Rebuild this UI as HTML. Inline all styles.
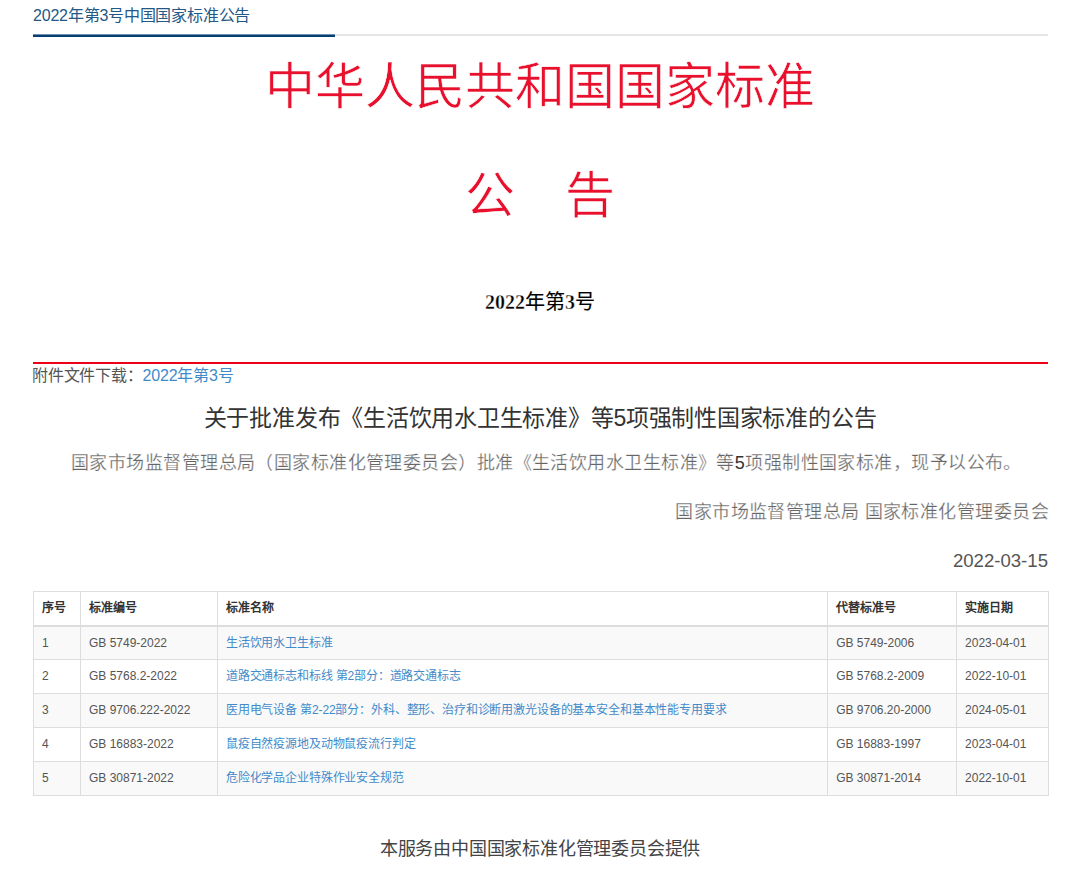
<!DOCTYPE html>
<html lang="zh-CN">
<head>
<meta charset="utf-8">
<style>
html,body{margin:0;padding:0;background:#fff;}
body{width:1080px;height:872px;position:relative;overflow:hidden;font-family:"Liberation Sans",sans-serif;color:#333;}
.abs{position:absolute;white-space:nowrap;}
#crumb{left:33px;top:6px;font-size:16px;letter-spacing:-0.2px;line-height:20px;color:#245886;}
#gline{left:33px;top:34px;width:1015px;height:2px;background:#e5e5e5;}
#bline{left:33px;top:34px;width:302px;height:3px;background:linear-gradient(#6f90b0 0,#6f90b0 1px,#053f72 1px,#053f72 3px);}
.red{color:#e8102c;font-family:"Liberation Serif",serif;-webkit-text-stroke:0.6px #fff;}
#t1{left:0;width:1080px;text-align:center;top:57px;font-size:50px;line-height:60px;}
#t2{left:0;width:1080px;text-align:center;top:166px;font-size:50px;line-height:60px;}
#t3{left:0;width:1080px;text-align:center;top:290px;font-size:20px;line-height:24px;font-family:"Liberation Serif",serif;color:#000;}
#t3 b{font-weight:bold;-webkit-text-stroke:0.35px #fff;}
#t3{-webkit-text-stroke:0.15px #000;}
#rline{left:33px;top:362px;width:1015px;height:2px;background:#ee0016;}
#att{left:32px;top:365px;font-size:16px;letter-spacing:-0.2px;line-height:22px;color:#555;}
#att a{color:#428bca;text-decoration:none;}
#title{left:0;width:1080px;text-align:center;top:403px;font-size:23px;letter-spacing:-0.24px;line-height:30px;color:#333;}
#para{left:71px;top:451px;font-size:18px;letter-spacing:0.44px;line-height:24px;color:#666;font-family:"Liberation Serif",serif;-webkit-text-stroke:0.25px #fff;}
#para .d{font-family:"Liberation Sans",sans-serif;-webkit-text-stroke:0;color:#333;}
#sign{right:31px;top:500px;font-size:18px;letter-spacing:0.44px;line-height:24px;color:#666;font-family:"Liberation Serif",serif;-webkit-text-stroke:0.25px #fff;}
#date{right:32px;top:550px;font-size:18.6px;line-height:22px;color:#555;}
table{position:absolute;left:33px;top:591px;width:1016px;border-collapse:collapse;font-size:12px;line-height:17px;}
td,th{border:1px solid #ddd;padding:8px;text-align:left;vertical-align:top;}
td{color:#555;}
th{border-bottom:2px solid #ddd;font-weight:bold;color:#333;}
tbody tr:nth-child(odd){background:#f9f9f9;}
td a{color:#428bca;text-decoration:none;letter-spacing:-0.15px;}
tbody tr:first-child td{padding-bottom:7px;}
#foot{left:0;width:1080px;text-align:center;top:837px;font-size:18px;letter-spacing:-0.2px;line-height:24px;color:#444;}
</style>
</head>
<body>
<div class="abs" id="crumb">2022年第3号中国国家标准公告</div>
<div class="abs" id="gline"></div>
<div class="abs" id="bline"></div>
<div class="abs red" id="t1">中华人民共和国国家标准</div>
<div class="abs red" id="t2">公　告</div>
<div class="abs" id="t3"><b>2022</b>年第<b>3</b>号</div>
<div class="abs" id="rline"></div>
<div class="abs" id="att">附件文件下载：<a>2022年第3号</a></div>
<div class="abs" id="title">关于批准发布《生活饮用水卫生标准》等5项强制性国家标准的公告</div>
<div class="abs" id="para">国家市场监督管理总局（国家标准化管理委员会）批准《生活饮用水卫生标准》等<span class="d">5</span>项强制性国家标准，现予以公布。</div>
<div class="abs" id="sign">国家市场监督管理总局 国家标准化管理委员会</div>
<div class="abs" id="date">2022-03-15</div>
<table>
<colgroup><col style="width:47px"><col style="width:137px"><col style="width:611px"><col style="width:129px"><col style="width:92px"></colgroup>
<thead><tr><th>序号</th><th>标准编号</th><th>标准名称</th><th>代替标准号</th><th>实施日期</th></tr></thead>
<tbody>
<tr><td>1</td><td>GB 5749-2022</td><td><a>生活饮用水卫生标准</a></td><td>GB 5749-2006</td><td>2023-04-01</td></tr>
<tr><td>2</td><td>GB 5768.2-2022</td><td><a>道路交通标志和标线 第2部分：道路交通标志</a></td><td>GB 5768.2-2009</td><td>2022-10-01</td></tr>
<tr><td>3</td><td>GB 9706.222-2022</td><td><a>医用电气设备 第2-22部分：外科、整形、治疗和诊断用激光设备的基本安全和基本性能专用要求</a></td><td>GB 9706.20-2000</td><td>2024-05-01</td></tr>
<tr><td>4</td><td>GB 16883-2022</td><td><a>鼠疫自然疫源地及动物鼠疫流行判定</a></td><td>GB 16883-1997</td><td>2023-04-01</td></tr>
<tr><td>5</td><td>GB 30871-2022</td><td><a>危险化学品企业特殊作业安全规范</a></td><td>GB 30871-2014</td><td>2022-10-01</td></tr>
</tbody>
</table>
<div class="abs" id="foot">本服务由中国国家标准化管理委员会提供</div>
</body>
</html>
